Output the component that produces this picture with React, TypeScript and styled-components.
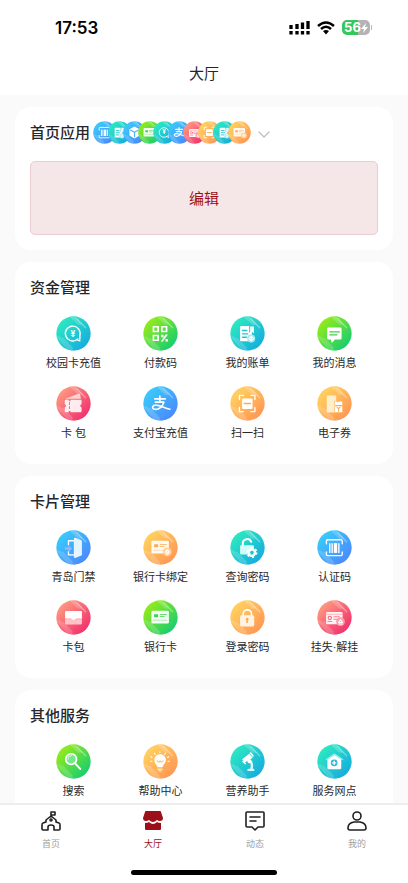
import React, { useId } from "react";
import styled, { createGlobalStyle } from "styled-components";

type Tone = "cyan" | "green" | "red" | "blue" | "orange";

const tones: Record<Tone, [string, string]> = {
  cyan: ["#2ceac0", "#16acdf"],
  green: ["#97ec18", "#16cd72"],
  red: ["#ff9a80", "#f1306e"],
  blue: ["#38ccfb", "#4c88fd"],
  orange: ["#ffd35f", "#ff9655"],
};

const GlobalStyle = createGlobalStyle`
  * { box-sizing: border-box; }
  body {
    margin: 0;
    background: #fafafa;
    color: #26262a;
    font-family: "Noto Sans CJK SC", "Noto Sans", sans-serif;
  }
  button { font-family: inherit; }
`;

const Screen = styled.div`
  display: flex;
  flex-direction: column;
  height: 100vh;
`;

const Header = styled.header`
  flex: none;
  background: #fff;
`;

const StatusBar = styled.div`
  display: flex;
  align-items: center;
  justify-content: space-between;
  height: 55px;
  padding: 0 36px 0 55px;
`;

const Clock = styled.time`
  font: 600 17px/20px Inter, sans-serif;
  color: #000;
`;

const StatusIcons = styled.div`
  display: flex;
  align-items: center;
  gap: 7px;
`;

const Battery = styled.div`
  display: flex;
  align-items: center;
  gap: 1px;
`;

const BatteryBody = styled.div`
  display: flex;
  align-items: center;
  justify-content: center;
  width: 28px;
  height: 15px;
  border-radius: 5px;
  color: #fff;
  background: linear-gradient(90deg, #35c759 56%, #b4b4b6 56%);
  font: 700 13px/15px Inter, sans-serif;
`;

const BatteryTip = styled.span`
  width: 1px;
  height: 5px;
  border-radius: 1px;
  background: #b4b4b6;
`;

const PageTitle = styled.h1`
  margin: 0;
  height: 40px;
  font-size: 15px;
  font-weight: 400;
  line-height: 36px;
  text-align: center;
`;

const Content = styled.main`
  flex: 1;
  min-height: 0;
  overflow: hidden;
  display: flex;
  flex-direction: column;
  gap: 12px;
  padding: 12px 15px 0;
`;

const Card = styled.section`
  flex: none;
  padding: 15px;
  border-radius: 16px;
  background: #fff;
`;

const CardTitle = styled.h2`
  margin: 0;
  font-size: 15px;
  font-weight: 500;
  line-height: 20px;
`;

const HomeHead = styled.div`
  display: flex;
  align-items: center;
  gap: 3px;
  height: 20px;
`;

const Stack = styled.div`
  display: flex;
  > svg + svg { margin-left: -8px; }
`;

const Expand = styled.button`
  display: flex;
  margin-left: 3px;
  padding: 6px 0 0;
  border: 0;
  background: none;
`;

const EditButton = styled.button`
  display: block;
  width: 100%;
  height: 74px;
  margin-top: 19px;
  padding: 0 0 2px;
  border: 1px solid #ebccd1;
  border-radius: 5px;
  background: #f5e6e7;
  color: #9c1119;
  font-size: 15px;
`;

const Grid = styled.div`
  display: grid;
  grid-template-columns: repeat(4, 1fr);
  row-gap: 13px;
  padding: 19px 0 6px;
`;

const AppButton = styled.button`
  display: flex;
  flex-direction: column;
  align-items: center;
  gap: 3px;
  padding: 0;
  border: 0;
  background: none;
  color: #29292b;
  font-family: "Liberation Sans", "Noto Sans CJK SC", sans-serif;
  font-size: 11px;
  line-height: 19px;
  white-space: nowrap;
`;

const TabBar = styled.nav`
  flex: none;
  display: flex;
  flex-direction: column;
  align-items: center;
  height: 80px;
  border-top: 2px solid #ededed;
  background: #fff;
`;

const Tabs = styled.div`
  display: flex;
  width: 100%;
`;

const Tab = styled.button<{ $active?: boolean }>`
  flex: 1;
  display: flex;
  flex-direction: column;
  align-items: center;
  gap: 6px;
  padding: 6px 0 0;
  border: 0;
  background: none;
  color: ${(p) => (p.$active ? "#9c1119" : "#a0a0a0")};
  font-size: 9px;
  line-height: 14px;
`;

const HomeIndicator = styled.div`
  width: 146px;
  height: 5px;
  margin-top: auto;
  margin-bottom: 8px;
  border-radius: 3px;
  background: #000;
`;

const stroke = (width: number, color = "#fff") => ({
  fill: "none",
  stroke: color,
  strokeWidth: width,
  strokeLinecap: "round" as const,
  strokeLinejoin: "round" as const,
});

const bankCard = (chip: string) => (
  <>
    <rect x="25" y="32" width="52" height="38" rx="4" fill="#fff" opacity=".93" />
    <rect x="33" y="42" width="12" height="9" rx="1" fill={chip} />
    <path d="M51 43H70M51 49H63" {...stroke(3, chip)} opacity=".75" />
    <path d="M31 60H38M42 60H49M53 60H60M64 60H71" {...stroke(2, chip)} opacity=".65" />
  </>
);

const glyphs = {
  recharge: (
    <>
      <path d="M65 68A22 22 0 1 1 71 58V69M60 70L71 74" {...stroke(4)} />
      <text x="50" y="61" textAnchor="middle" fill="#fff" fontFamily="Inter" fontSize="25" fontWeight="700">¥</text>
    </>
  ),
  qr: (
    <>
      <path d="M31 32H45V46H31ZM56 32H70V46H56ZM31 58H45V72H31Z" {...stroke(5)} strokeLinejoin="miter" />
      <path d="M54 56H61V63H54ZM67 55H74L59 76H53ZM67 68H74V76H67Z" fill="#fff" />
    </>
  ),
  ticket: (
    <>
      <path d="M27 38L68 22Q72 22 72 27L74 38Z" fill="#ffe3df" opacity=".85" />
      <path d="M29 41H38V45H43V41H73Q76 41 76 44V54Q72 55 72 59T76 64V75Q76 78 73 78H43V74H38V78H29Q26 78 26 75V64Q30 63 30 59T26 54V44Q26 41 29 41Z" fill="#fff" opacity=".88" />
      <path d="M40 49V55M40 61V67" {...stroke(3, "#fb6c74")} />
    </>
  ),
  alipay: (
    <path d="M35 38H66M50 30V48M37 48H62C59 60 47 72 34 69C24 66 29 56 39 57C51 57 65 67 80 69" {...stroke(5)} />
  ),
  bill: (
    <>
      <path d="M33 30H57V50L63 45L65 47V75H33Q30 75 30 72V33Q30 30 33 30Z" fill="#fff" />
      <path d="M63 31H71V52L65 47L60 51V31" fill="#fff" />
      <path d="M37 43H50M37 53H53M37 63H49" {...stroke(4, "#20c7ce")} />
      <circle cx="63" cy="67" r="12" fill="#a0e9f3" />
      <path d="M63 60L70 67L63 74L56 67ZM63 62V72" {...stroke(3)} />
    </>
  ),
  message: (
    <>
      <path d="M34 34H69Q73 34 73 38V66Q73 70 69 70H53L44 80L41 70H34Q30 70 30 66V38Q30 34 34 34Z" fill="#fff" />
      <path d="M38 47H67M38 56H59" {...stroke(4, "#47cf4e")} />
    </>
  ),
  scan: (
    <>
      <path d="M28 40V28H40M62 28H74V40M74 64V76H62M40 76H28V64" {...stroke(4)} />
      <rect x="36" y="37" width="31" height="31" rx="3" fill="#fff" />
      <path d="M42 52H61" {...stroke(4, "#ffac56")} />
    </>
  ),
  voucher: (
    <>
      <rect x="29" y="28" width="28" height="51" rx="3" fill="#fff4d7" opacity=".9" />
      <path d="M52 45H58Q61 50 65 45H76V56Q72 59 76 63V79H52V63Q55 59 52 56Z" fill="#fff" stroke="#ffb45c" strokeWidth="2" />
      <path d="M55 58H73M59 62L64 68L69 62M64 68V75" {...stroke(3, "#ffaf58")} />
    </>
  ),
  door: (
    <>
      <path d="M52 32H37V44M37 64V74H52" {...stroke(4)} />
      <path d="M26 51H37V45L48 55L37 65V59H26Z" fill="#86bbff" />
      <path d="M53 82V27Q53 22 58 23L74 30Q77 31 77 34V75L57 83Z" fill="#e4f5ff" />
    </>
  ),
  bind: (
    <>
      {bankCard("#ffab51")}
      <circle cx="72" cy="65" r="13" fill="#ffd39a" />
      <path d="M66 66L72 59L76 63M68 68L72 72L78 65M68 62L76 69" {...stroke(3)} />
    </>
  ),
  wallet: (
    <>
      <rect x="27" y="33" width="50" height="40" rx="4" fill="#ffc4c8" />
      <path d="M31 33H73Q77 33 77 37V56H60Q52 67 44 56H27V37Q27 33 31 33Z" fill="#fff" />
      <path d="M28 56H44Q52 67 60 56H76" {...stroke(2, "#ff9ca5")} />
    </>
  ),
  bank: bankCard("#42cf54"),
  unlock: (
    <>
      <path d="M38 46V40A13 13 0 0 1 63 35" {...stroke(6)} />
      <rect x="30" y="45" width="41" height="28" rx="4" fill="#d5fbf8" />
      <circle cx="65" cy="67" r="10" {...stroke(6)} />
      <circle cx="65" cy="67" r="14" {...stroke(5)} strokeDasharray="6 9" strokeLinecap="butt" />
      <circle cx="65" cy="67" r="5" fill="#21bfd0" />
    </>
  ),
  barcode: (
    <>
      <path d="M28 41V33Q28 29 32 29H71Q75 29 75 33V41M75 65V72Q75 76 71 76H32Q28 76 28 72V65" {...stroke(4)} />
      <path d="M38 39V68M45 39V68M65 39V68" {...stroke(4)} strokeLinecap="butt" />
      <path d="M50 39H60V68H50Z" fill="#fff" />
    </>
  ),
  lock: (
    <>
      <path d="M39 46V42A12 12 0 0 1 64 42V46" {...stroke(5)} />
      <rect x="30" y="45" width="42" height="34" rx="5" fill="#fff3e3" />
      <path d="M51 57V66" {...stroke(5, "#ffae54")} />
      <circle cx="51" cy="57" r="4" fill="#ffae54" />
    </>
  ),
  lost: (
    <>
      <rect x="27" y="36" width="49" height="36" rx="4" fill="#fff" opacity=".92" />
      <path d="M27 42H76" {...stroke(3, "#ffb2ba")} />
      <circle cx="38" cy="53" r="5" {...stroke(3, "#f65f7a")} />
      <path d="M32 64H44M50 50H67M50 57H61" {...stroke(3, "#f98296")} />
      <circle cx="70" cy="64" r="13" fill="#ff9ca8" />
      <path d="M64 67L70 58L76 67ZM65 71H75" {...stroke(3)} />
    </>
  ),
  search: (
    <>
      <circle cx="45" cy="45" r="16" fill="#76e887" stroke="#fff" strokeWidth="5" />
      <path d="M36 45A10 10 0 0 1 46 35" {...stroke(3)} opacity=".7" />
      <path d="M58 59L72 74" {...stroke(6)} />
    </>
  ),
  bulb: (
    <>
      <path d="M34 50A17 17 0 1 1 62 60Q59 64 58 69H43Q42 64 38 60A17 17 0 0 1 34 50Z" fill="#fff" />
      <path d="M42 50L47 54L51 50L55 54L60 50" {...stroke(3, "#ffbc55")} />
      <path d="M44 75H57M47 80H54" {...stroke(4, "#ffe7a6")} />
      <path d="M50 23V25M34 27L37 31M67 27L64 31M23 38L27 40M77 38L73 40M22 51H27M74 51H79" {...stroke(3)} />
    </>
  ),
  scope: (
    <>
      <path d="M36 45L57 29L68 41L44 55Z" fill="#fff" />
      <path d="M61 27L68 35M39 52L45 58" {...stroke(5)} />
      <path d="M58 49Q68 56 64 73M55 77H69" {...stroke(7, "#d7faff")} />
      <circle cx="58" cy="51" r="6" fill="#fff" />
    </>
  ),
  house: (
    <>
      <path d="M28 46L52 30L76 46" {...stroke(4, "#9ce7f7")} />
      <path d="M31 47L52 33L72 46V71Q72 75 68 75H35Q31 75 31 71Z" fill="#fff" />
      <circle cx="51" cy="56" r="10" fill="#22b9d3" />
      <path d="M51 51V61M46 56H56" {...stroke(4)} />
    </>
  ),
  cube: (
    <>
      <path d="M52 25L75 37V65L52 79L29 65V37Z" fill="#fff" />
      <path d="M34 41L52 51L70 41M52 51V71" {...stroke(5, "#50b1fb")} />
    </>
  ),
};

type Glyph = keyof typeof glyphs;

function Disc({ tone, glyph, size = 35 }: { tone: Tone; glyph: Glyph; size?: number }) {
  const id = useId();
  const [from, to] = tones[tone];
  return (
    <svg width={size} height={size} viewBox="0 0 104 104" aria-hidden="true">
      <defs>
        <linearGradient id={`${id}g`} x1=".12" y1=".12" x2=".88" y2=".88">
          <stop stopColor={from} />
          <stop offset="1" stopColor={to} />
        </linearGradient>
        <clipPath id={`${id}c`}>
          <circle cx="52" cy="52" r="51" />
        </clipPath>
      </defs>
      <circle cx="52" cy="52" r="51" fill={`url(#${id}g)`} />
      <g clipPath={`url(#${id}c)`} fill="#fff">
        <path d="M38 0H55L80 26H66Z" opacity=".2" />
        <path d="M61 7L88 35" {...stroke(4)} opacity=".35" />
        <path d="M0 61H12L58 107H40Z" opacity=".16" />
        <path d="M20 66L48 95" {...stroke(4)} opacity=".18" />
      </g>
      {glyphs[glyph]}
    </svg>
  );
}

const homeApps: [Tone, Glyph][] = [
  ["blue", "barcode"], ["cyan", "bill"], ["blue", "cube"], ["green", "bank"], ["cyan", "recharge"],
  ["blue", "alipay"], ["red", "lost"], ["orange", "scan"], ["cyan", "bill"], ["orange", "bind"],
];

const sections: { title: string; apps: [string, Tone, Glyph][] }[] = [
  {
    title: "资金管理",
    apps: [
      ["校园卡充值", "cyan", "recharge"], ["付款码", "green", "qr"], ["我的账单", "cyan", "bill"], ["我的消息", "green", "message"],
      ["卡 包", "red", "ticket"], ["支付宝充值", "blue", "alipay"], ["扫一扫", "orange", "scan"], ["电子券", "orange", "voucher"],
    ],
  },
  {
    title: "卡片管理",
    apps: [
      ["青岛门禁", "blue", "door"], ["银行卡绑定", "orange", "bind"], ["查询密码", "cyan", "unlock"], ["认证码", "blue", "barcode"],
      ["卡包", "red", "wallet"], ["银行卡", "green", "bank"], ["登录密码", "orange", "lock"], ["挂失·解挂", "red", "lost"],
    ],
  },
  {
    title: "其他服务",
    apps: [
      ["搜索", "green", "search"], ["帮助中心", "orange", "bulb"], ["营养助手", "cyan", "scope"], ["服务网点", "cyan", "house"],
    ],
  },
];

const line = stroke(1.6, "#202020");

const tabs = [
  {
    label: "首页",
    icon: (
      <g {...line}>
        <path d="M10 6V1H14V4H10M5 11V9L10 5L15 9V11L18 12Q19 12 19 14V18Q19 19 18 19H13V16Q13 14 10 14T7 16V19H2Q1 19 1 18V14Q1 12 2 12Z" />
        <circle cx="10" cy="9" r="1" />
      </g>
    ),
  },
  {
    label: "大厅",
    active: true,
    icon: (
      <g fill="#9c1119">
        <path d="M3 0H17Q18 0 18 1L20 7Q20 10 17 10Q15 10 14 9Q12 11 10 11T6 9Q5 10 3 10Q0 10 0 7L2 1Q2 0 3 0Z" />
        <path d="M2 12Q5 12 6 11Q8 13 10 13T14 11Q15 12 18 12V18Q18 19 17 19H3Q2 19 2 18Z" />
      </g>
    ),
  },
  {
    label: "动态",
    icon: <path d="M2 1H18Q19 1 19 2V15Q19 16 18 16H13L10 19L7 16H2Q1 16 1 15V2Q1 1 2 1ZM5 6H15M5 10H11" {...line} />,
  },
  {
    label: "我的",
    icon: (
      <g {...line}>
        <circle cx="10" cy="5" r="4" />
        <path d="M7 11H13Q19 12 19 17Q19 19 17 19H3Q1 19 1 17Q1 12 7 11Z" />
      </g>
    ),
  },
];

export default function App() {
  return (
    <Screen>
      <GlobalStyle />
      <Header>
        <StatusBar>
          <Clock>17:53</Clock>
          <StatusIcons>
            <svg width="21" height="15" viewBox="0 0 21 15" aria-label="信号">
              <path d="M2 5V9M8 4V9M13.5 2.5V9M19 1V9" {...stroke(3.3, "#000")} strokeLinecap="butt" />
              <path d="M2 11V14.5M8 11V14.5M13.5 11V14.5M19 11V14.5" {...stroke(3.3, "#000")} strokeLinecap="butt" />
            </svg>
            <svg width="18" height="14" viewBox="0 0 18 14" aria-label="无线网络">
              <path d="M1 5Q9 -2 17 5M4 8Q9 3.5 14 8" {...stroke(2.5, "#000")} strokeLinecap="butt" />
              <path d="M6 10Q9 7.8 12 10L9 13.5Z" />
            </svg>
            <Battery>
              <BatteryBody>
                56
                <svg width="7" height="10" viewBox="0 0 7 10" aria-label="充电中">
                  <path d="M5 0L0 6H3L2 10L7 4H4Z" fill="#fff" />
                </svg>
              </BatteryBody>
              <BatteryTip />
            </Battery>
          </StatusIcons>
        </StatusBar>
        <PageTitle>大厅</PageTitle>
      </Header>
      <Content>
        <Card>
          <HomeHead>
            <CardTitle>首页应用</CardTitle>
            <Stack>
              {homeApps.map(([tone, glyph], i) => (
                <Disc key={i} tone={tone} glyph={glyph} size={23} />
              ))}
            </Stack>
            <Expand aria-label="展开">
              <svg width="14" height="8" viewBox="0 0 14 8">
                <path d="M2 1L7 6L12 1" {...stroke(1.2, "#bdbdc1")} />
              </svg>
            </Expand>
          </HomeHead>
          <EditButton>编辑</EditButton>
        </Card>
        {sections.map((section) => (
          <Card key={section.title}>
            <CardTitle>{section.title}</CardTitle>
            <Grid>
              {section.apps.map(([label, tone, glyph]) => (
                <AppButton key={label}>
                  <Disc tone={tone} glyph={glyph} />
                  {label}
                </AppButton>
              ))}
            </Grid>
          </Card>
        ))}
      </Content>
      <TabBar>
        <Tabs>
          {tabs.map((tab) => (
            <Tab key={tab.label} $active={tab.active} aria-current={tab.active ? "page" : undefined}>
              <svg width="20" height="20" viewBox="0 0 20 20" aria-hidden="true">{tab.icon}</svg>
              {tab.label}
            </Tab>
          ))}
        </Tabs>
        <HomeIndicator />
      </TabBar>
    </Screen>
  );
}
